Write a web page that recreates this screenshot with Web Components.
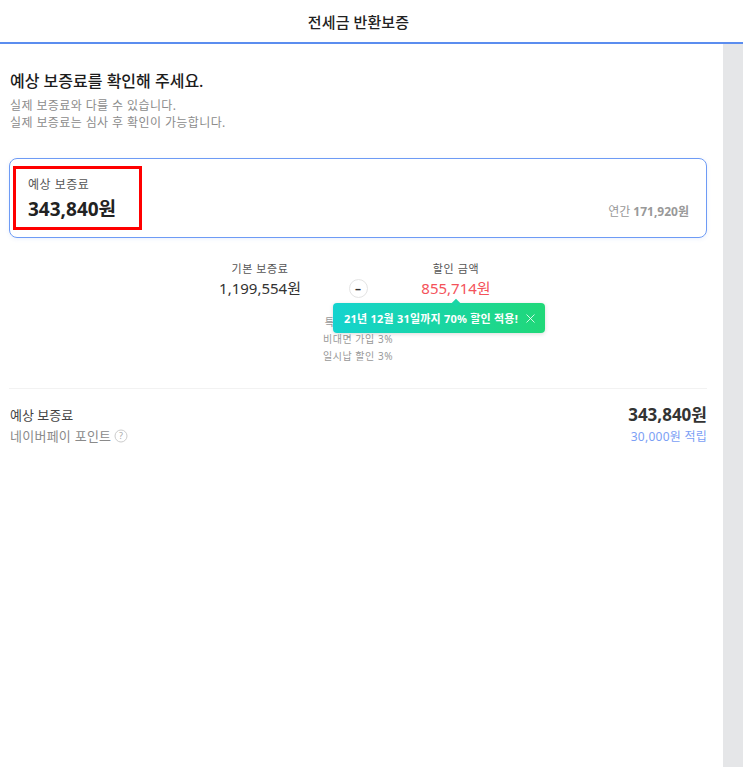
<!DOCTYPE html>
<html lang="ko">
<head>
<meta charset="utf-8">
<title>전세금 반환보증</title>
<style>
html,body{margin:0;padding:0;height:100%;overflow:hidden;background:#fff;}
body{font-family:"Noto Sans","Noto Sans CJK KR",sans-serif;color:#222;}
</style>
</head>
<body>
<app-page>
  <top-bar>전세금 반환보증</top-bar>
  <page-intro heading="예상 보증료를 확인해 주세요.">
    <div>실제 보증료와 다를 수 있습니다.</div>
    <div>실제 보증료는 심사 후 확인이 가능합니다.</div>
  </page-intro>
  <premium-card label="예상 보증료" amount="343,840원" yearly="171,920원"></premium-card>
  <calc-row></calc-row>
  <summary-row></summary-row>
</app-page>
<script>
//pagina con barra de scroll
class AppPage extends HTMLElement{
  constructor(){
    super();
    this.attachShadow({mode:"open"}).innerHTML=`
      <style>
        :host{display:grid;grid-template-columns:1fr 20px;grid-template-rows:44px 1fr;height:767px;width:743px;}
        .main{grid-column:1;grid-row:2;padding:0 16px 0 9px;min-width:0;}
        .scroll{grid-column:2;grid-row:2;background:#e5e6e8;}
        ::slotted(top-bar){grid-column:1 / 3;grid-row:1;}
      </style>
      <slot name="bar"></slot>
      <div class="main"><slot></slot></div>
      <div class="scroll"></div>`;
    this.querySelector("top-bar").slot="bar";
  }
}
class TopBar extends HTMLElement{
  constructor(){
    super();
    this.attachShadow({mode:"open"}).innerHTML=`
      <style>
        :host{display:flex;align-items:center;justify-content:center;height:42px;padding-right:26px;border-bottom:2px solid #5b8def;
          font-size:15px;font-weight:500;color:#222;letter-spacing:.1px;}
      </style><slot></slot>`;
  }
}
class PageIntro extends HTMLElement{
  constructor(){
    super();
    this.attachShadow({mode:"open"}).innerHTML=`
      <style>
        :host{display:block;padding:26px 0 0 1px;}
        h2{margin:0 0 5px;font-size:16px;line-height:22px;font-weight:500;color:#1c1c1c;}
        .sub{font-size:12px;line-height:17px;color:#8c8c8c;letter-spacing:.4px;}
      </style>
      <h2></h2><div class="sub"><slot></slot></div>`;
    this.shadowRoot.querySelector("h2").textContent=this.getAttribute("heading");
  }
}
class PremiumCard extends HTMLElement{
  constructor(){
    super();
    this.attachShadow({mode:"open"}).innerHTML=`
      <style>
        :host{display:flex;align-items:stretch;justify-content:space-between;box-sizing:border-box;height:80px;margin-top:27px;
          padding:7px 17px 7px 3px;border:1px solid #6e9bf5;border-radius:8px;box-shadow:0 1px 4px rgba(90,130,230,.12);}
        .box{box-sizing:border-box;width:129px;border:3px solid #f00;padding:7px 0 0 12px;}
        .label{font-size:12px;line-height:18px;color:#555;letter-spacing:.5px;}
        .amount{font-size:19px;line-height:26px;font-weight:700;color:#222;margin-top:2px;}
        .yearly{align-self:flex-end;font-size:12px;line-height:18px;color:#999;margin-bottom:9px;}
        .yearly b{font-weight:700;}
      </style>
      <div class="box"><div class="label"></div><div class="amount"></div></div>
      <div class="yearly">연간 <b></b></div>`;
    let s=this.shadowRoot;
    s.querySelector(".label").textContent=this.getAttribute("label");
    s.querySelector(".amount").textContent=this.getAttribute("amount");
    s.querySelector("b").textContent=this.getAttribute("yearly");
  }
}
class PromoTip extends HTMLElement{
  constructor(){
    super();
    this.attachShadow({mode:"open"}).innerHTML=`
      <style>
        :host{position:absolute;left:333px;top:303px;width:212px;height:30px;box-sizing:border-box;display:flex;align-items:center;justify-content:space-between;
          padding:0 10px 0 11px;border-radius:4px;background:linear-gradient(90deg,#14d3cf,#20d878);letter-spacing:.22px;
          color:#fff;font-size:11px;font-weight:700;white-space:nowrap;box-shadow:0 1px 4px rgba(0,0,0,.15);}
        :host::before{content:"";position:absolute;left:120px;top:-3px;width:6px;height:6px;background:#19d6a6;transform:rotate(45deg);}
        span{position:relative;}
        svg{display:block;flex:none;}
      </style>
      <span><slot></slot></span>
      <svg width="9" height="9" viewBox="0 0 9 9" fill="none" stroke="#fff" stroke-opacity=".8" stroke-width="1"><path d="M.5.5l8 8M8.5.5l-8 8"/></svg>`;
  }
}
class CalcRow extends HTMLElement{
  constructor(){
    super();
    this.attachShadow({mode:"open"}).innerHTML=`
      <style>
        :host{display:block;height:129px;border-bottom:1px solid #f2f2f2;box-sizing:border-box;margin-top:22px;}
        .row{display:grid;grid-template-columns:160px 36px 160px;justify-content:center;}
        .col{text-align:center;}
        .t{font-size:11px;line-height:17px;color:#555;letter-spacing:.6px;}
        .v{font-size:15px;line-height:23px;color:#333;white-space:nowrap;}
        .red{color:#f4525a;}
        .minus{justify-self:center;align-self:end;margin-bottom:2px;width:19px;height:19px;border:1px solid #e4e4e4;border-radius:50%;
          display:flex;align-items:center;justify-content:center;font-size:12px;font-weight:700;color:#333;box-sizing:border-box;line-height:1;}
        .notes{margin-top:14px;text-align:center;font-size:10px;line-height:17px;color:#999;letter-spacing:.55px;}
      </style>
      <div class="row">
        <div class="col"><div class="t">기본 보증료</div><div class="v">1,199,554원</div></div>
        <div class="minus">–</div>
        <div class="col"><div class="t">할인 금액</div><div class="v red">855,714원</div></div>
      </div>
      <div class="notes"><div>특별 할인 64%</div><div>비대면 가입 3%</div><div>일시납 할인 3%</div></div>
      <promo-tip>21년 12월 31일까지 70% 할인 적용!</promo-tip>`;
  }
}
class SummaryRow extends HTMLElement{
  constructor(){
    super();
    this.attachShadow({mode:"open"}).innerHTML=`
      <style>
        :host{display:flex;justify-content:space-between;padding:14px 0 0 1px;}
        .l1{font-size:13px;line-height:22px;color:#444;margin-top:1px;}
        .l2{font-size:13px;line-height:20px;color:#8a8a8a;display:flex;align-items:center;gap:3px;letter-spacing:.25px;}
        .r{text-align:right;}
        .r1{font-size:17px;line-height:24px;font-weight:700;color:#333;}
        .r2{font-size:12px;line-height:20px;color:#7ba0f5;letter-spacing:.25px;}
        svg{display:block;}
        text{font-size:9px;fill:#aaa;}
      </style>
      <div>
        <div class="l1">예상 보증료</div>
        <div class="l2">네이버페이 포인트
          <svg width="14" height="14" viewBox="0 0 14 14"><circle cx="7" cy="7" r="6" fill="none" stroke="#ccc"/><text x="7" y="10" text-anchor="middle">?</text></svg>
        </div>
      </div>
      <div class="r"><div class="r1">343,840원</div><div class="r2">30,000원 적립</div></div>`;
  }
}
customElements.define("app-page",AppPage);
customElements.define("top-bar",TopBar);
customElements.define("page-intro",PageIntro);
customElements.define("premium-card",PremiumCard);
customElements.define("promo-tip",PromoTip);
customElements.define("calc-row",CalcRow);
customElements.define("summary-row",SummaryRow);
</script>
</body>
</html>
